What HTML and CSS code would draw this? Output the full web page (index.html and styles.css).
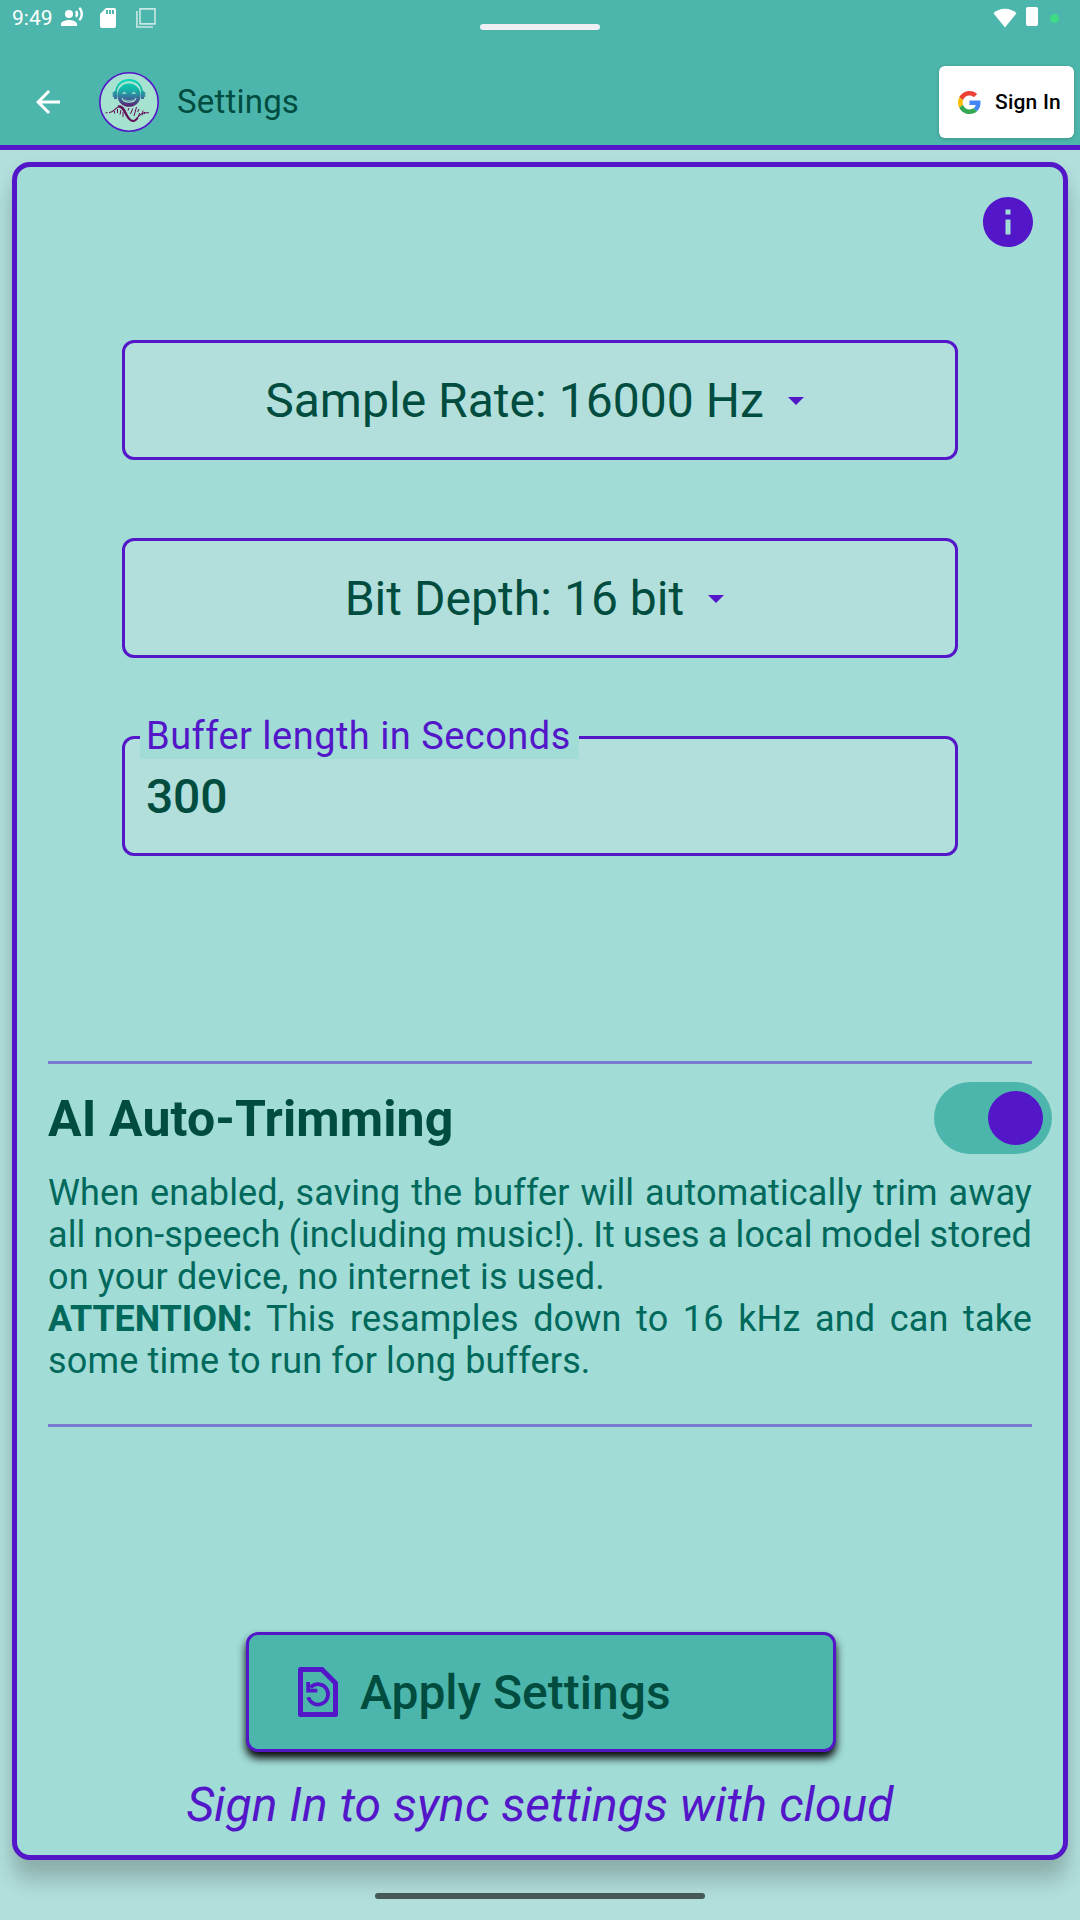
FILE: index.html
```html
<!DOCTYPE html>
<html lang="en">
<head>
<meta charset="utf-8">
<title>Settings</title>
<link rel="stylesheet" href="styles.css">
</head>
<body>
<div class="screen">
  <header class="top">
    <div class="status">
      <span class="clock">9:49</span>
      <svg class="st-voice" viewBox="0 0 24 24" width="24" height="24"><circle cx="9" cy="9" r="4"/><path d="M9 15c-2.670 0-8 1.340-8 4v2h16v-2c0-2.660-5.330-4-8-4zM16.760 5.360l-1.680 1.690c.84 1.180.84 2.710 0 3.890l1.680 1.690c2.020-2.020 2.020-5.070 0-7.270zM20.070 2l-1.630 1.630c2.770 3.020 2.770 7.560 0 10.740L20.070 16c3.900-3.890 3.910-9.950 0-14z"/></svg>
      <svg class="st-sd" viewBox="0 0 24 24" width="24" height="24"><path d="M18 2h-8L4.020 8 4 20c0 1.100.9 2 2 2h12c1.100 0 2-.9 2-2V4c0-1.100-.9-2-2-2zm-6 6h-2V4h2v4zm3 0h-2V4h2v4zm3 0h-2V4h2v4z"/></svg>
      <svg class="st-layers" viewBox="0 0 20 20" width="20" height="20"><path d="M4 .9h15v15H4zM.9 3v16H17"/></svg>
      <span class="grip"></span>
      <svg class="st-wifi" viewBox="0 0 24 20" width="24" height="20"><path d="M12 19.500L.500 5.200C3.500 2.400 7.500.800 12 .800s8.500 1.600 11.500 4.400z"/></svg>
      <span class="battery"></span>
      <span class="dot"></span>
    </div>
    <div class="bar">
      <svg class="back" viewBox="0 0 24 24" width="36" height="36"><path d="M20 11H7.830l5.590-5.590L12 4l-8 8 8 8 1.410-1.410L7.830 13H20v-2z"/></svg>
      <svg class="logo" viewBox="0 0 60 60" width="60" height="60">
        <defs><linearGradient id="face" x1="0" y1="7" x2="0" y2="50" gradientUnits="userSpaceOnUse"><stop offset="0" stop-color="#00dcb9"/><stop offset=".25" stop-color="#16b3a8"/><stop offset=".45" stop-color="#3a6c99"/><stop offset=".62" stop-color="#5a2372"/><stop offset="1" stop-color="#660e5c"/></linearGradient></defs>
        <circle cx="30" cy="30" r="29.200" fill="#a5e2cf" stroke="#5316c8" stroke-width="1.600"/>
        <g fill="none" stroke="url(#face)">
          <path stroke-width="1.800" d="M17 20C18 4 42 4 43 20"/>
          <path stroke-width="3" d="M16.500 19v8M43.500 19v8"/>
          <path stroke-width="1.200" d="M14.300 20v5M45.700 20v5"/>
        </g>
        <circle cx="30" cy="23.200" r="11.600" fill="url(#face)"/>
        <g fill="none" stroke="#a5e2cf">
          <path d="M23.500 21.800l1.700-1.300 1.700 1.300M33.100 21.800l1.700-1.300 1.700 1.300" stroke-width="1.200"/>
          <path d="M23 26c1.500 5.500 12.500 5.500 14 0" stroke-width="1.100"/><path d="M25.500 27.500c2 1.700 7 1.700 9 0" stroke-width=".7"/>
        </g>
        <g fill="none" stroke="#660e5c" stroke-width="1.100">
          <path d="M6.500 40.700h2M10 40.700c6 0 6-6.500 12-6.500 4.500 0 6 15 12 15 5 0 4-8 12-8.500h4"/>
          <path stroke-width="2.200" d="M19 34.500c7-1.500 8 14.500 15 14.500 2.500 0 3.500-1.500 4.500-3"/>
          <path stroke-width="1" d="M15.500 39v2.500M18.500 37v4M21 42.500l1-4.500M24 40v5M29 38.500l1-2.500M31.500 42l2.300-5.500M35 44l2.500-9M38.500 40l1.500-3M39.500 45l1-4M43 43.500l1-5M45.500 40v2"/>
        </g>
      </svg>
      <h1 class="title">Settings</h1>
      <button class="signin">
        <svg viewBox="0 0 48 48" width="23" height="23"><path fill="#ea4335" d="M24 9.500c3.540 0 6.710 1.220 9.210 3.600l6.850-6.850C35.900 2.380 30.470 0 24 0 14.620 0 6.510 5.380 2.560 13.220l7.980 6.190C12.430 13.720 17.740 9.500 24 9.500z"/><path fill="#4285f4" d="M46.980 24.550c0-1.570-.15-3.090-.38-4.550H24v9.020h12.940c-.58 2.960-2.260 5.480-4.780 7.180l7.730 6c4.510-4.180 7.090-10.360 7.090-17.650z"/><path fill="#fbbc05" d="M10.530 28.590c-.48-1.450-.76-2.990-.76-4.590s.27-3.140.76-4.590l-7.980-6.190C.92 16.460 0 20.120 0 24s.92 7.540 2.560 10.780l7.970-6.190z"/><path fill="#34a853" d="M24 48c6.480 0 11.930-2.130 15.890-5.810l-7.730-6c-2.150 1.450-4.920 2.300-8.160 2.300-6.260 0-11.570-4.220-13.470-9.910l-7.980 6.190C6.510 42.620 14.620 48 24 48z"/></svg>
        <span>Sign In</span>
      </button>
    </div>
  </header>

  <main class="card">
    <svg class="info" viewBox="2 2 20 20" width="50" height="50"><path d="M12 2C6.480 2 2 6.480 2 12s4.480 10 10 10 10-4.480 10-10S17.520 2 12 2zm1 15h-2v-6h2v6zm0-8h-2V7h2v2z"/></svg>
    <div class="fields">
      <div class="field select"><span>Sample Rate: 16000 Hz</span><i class="caret"></i></div>
      <div class="field select"><span>Bit Depth: 16 bit</span><i class="caret"></i></div>
      <div class="field input"><label class="label">Buffer length in Seconds</label><span class="value">300</span></div>
    </div>

    <section class="trim">
      <div class="trim-head"><h2>AI Auto-Trimming</h2><span class="toggle"><i></i></span></div>
      <p><span class="tight">When enabled, saving the buffer will automatically trim away all non-speech (including music!). It uses a local model stored</span> on your device, no internet is used.</p>
      <p><b>ATTENTION:</b> This resamples down to 16 kHz and can take some time to run for long buffers.</p>
    </section>

    <button class="apply">
      <svg viewBox="4 2 16 20" width="40" height="50"><path fill-rule="evenodd" d="M14 2H5a1 1 0 0 0-1 1v18a1 1 0 0 0 1 1h14a1 1 0 0 0 1-1V8zM18 20H6V4h7.170L18 8.830z"/><path class="arc" d="M8.100 14.100a4.050 4.050 0 1 0 .9-3.900"/><path d="M7.300 8h1.500v2.700h2.900v1.500H7.300z"/></svg>
      <span>Apply Settings</span>
    </button>
    <div class="sync">Sign In to sync settings with cloud</div>
  </main>
  <div class="home"></div>
</div>
</body>
</html>
```
FILE: styles.css
```css
* { box-sizing: border-box; }
body { margin: 0; font-family: Roboto, sans-serif; }
h1, h2, p { margin: 0; font-weight: 400; }
button { font-family: inherit; }
svg { flex: none; display: block; }

.screen {
  width: 1080px; height: 1920px; overflow: hidden;
  display: flex; flex-direction: column; align-items: center;
  background: #b2dfdb;
}

.top {
  width: 100%; height: 150px; flex: none;
  position: relative; z-index: 1;
  background: #4db6ac; border-bottom: 5px solid #5316c8;
}
.status { height: 36px; padding: 0 20px 0 12px; display: flex; align-items: center; }
.status svg { fill: #fff; }
.clock { width: 48px; font-size: 21px; line-height: 36px; color: #fff; }
.st-voice { margin-top: -2px; }
.st-sd { margin-left: 12px; }
.status .st-layers { margin-left: 16px; fill: none; stroke: #c7e8e4; stroke-width: 1.6; }
.grip { width: 120px; height: 6px; margin: 18px 0 0 324px; border-radius: 3px; background: #f0f0f4; }
.st-wifi { margin-left: 393px; }
.battery { width: 12px; height: 19px; margin: -3px 0 0 9px; border-radius: 2px; background: #fff; }
.dot { width: 9px; height: 9px; margin-left: 12px; border-radius: 50%; background: #3ddc84; }

.bar { height: 109px; padding: 23px 6px 0 30px; display: flex; align-items: center; }
.back { fill: #fff; }
.logo { margin-left: 33px; }
.title { margin-left: 18px; font-size: 33px; line-height: 40px; letter-spacing: .2px; color: #004d40; }
.signin {
  width: 135px; height: 72px; margin-left: auto; padding: 0 0 0 19px;
  display: flex; align-items: center; gap: 14px;
  border: 0; border-radius: 6px; background: #fff; box-shadow: 0 1px 4px rgba(0, 0, 0, .2);
  font-size: 21px; font-weight: 500; letter-spacing: .2px; color: #000; white-space: nowrap;
}

.card {
  width: 1056px; height: 1698px; margin-top: 12px; flex: none;
  display: flex; flex-direction: column; align-items: center;
  border: 5px solid #5316c8; border-radius: 18px; background: #a1dcd6;
  box-shadow: 0 22px 20px rgba(0, 0, 0, .18), 0 4px 16px rgba(0, 0, 0, .06);
}
.info { margin: 30px 30px 0 0; align-self: flex-end; fill: #5316c8; }

.fields { width: 836px; margin-top: 93px; display: flex; flex-direction: column; gap: 78px; }
.field {
  position: relative; height: 120px; border: 3px solid #5316c8; border-radius: 12px;
  background: #b2dfdb; color: #004d40; font-size: 48px; line-height: 56px;
}
.select { display: flex; align-items: center; justify-content: center; gap: 24px; padding: 2px 11px 0 0; letter-spacing: .04px; }
.caret { border: 8px solid transparent; border-top-color: #5316c8; border-bottom: 0; }
.label {
  position: absolute; left: 15px; top: -25px; width: 439px; height: 45px; padding-left: 6px;
  background: #a1dcd6; color: #5316c8; font-size: 38px; line-height: 44px; letter-spacing: .47px; white-space: nowrap;
}
.value { display: block; padding: 30px 0 0 21px; font-weight: 500; letter-spacing: -.2px; }

.trim {
  width: 984px; height: 366px; margin-top: 205px; padding-top: 18px;
  border: solid #7a7bd0; border-width: 3px 0;
}
.trim-head { height: 72px; margin-right: -20px; display: flex; align-items: center; justify-content: space-between; }
.trim h2 { padding-top: 2px; font-size: 50px; font-weight: 700; line-height: 60px; letter-spacing: .12px; color: #004d40; }
.toggle { width: 118px; height: 72px; padding: 9px; display: flex; justify-content: flex-end; border-radius: 36px; background: #4db6ac; }
.toggle i { width: 55px; height: 54px; border-radius: 50%; background: #5316c8; }
.trim p { font-size: 36px; line-height: 42px; letter-spacing: .16px; text-align: justify; color: #00695c; }
.trim b { letter-spacing: -.1px; }
.trim-head + p { margin-top: 18px; }
.trim .tight { letter-spacing: .1px; word-spacing: -2.5px; }

.apply {
  width: 590px; height: 120px; margin: 205px 0 0 2px; padding: 0 0 0 49px;
  display: flex; align-items: center; gap: 22px;
  border: 3px solid #5316c8; border-radius: 12px; background: #4db6ac;
  box-shadow: 0 6px 9px rgba(0, 0, 0, .98);
  font-size: 48px; font-weight: 500; color: #004d40;
}
.apply svg { fill: #5316c8; }
.apply .arc { fill: none; stroke: #5316c8; stroke-width: 1.5; }
.sync { margin-top: 25px; font-size: 48px; line-height: 56px; letter-spacing: .06px; font-style: italic; color: #5316c8; white-space: nowrap; }

.home { width: 330px; height: 6px; margin-top: 33px; border-radius: 3px; background: #475955; position: relative; }
```
